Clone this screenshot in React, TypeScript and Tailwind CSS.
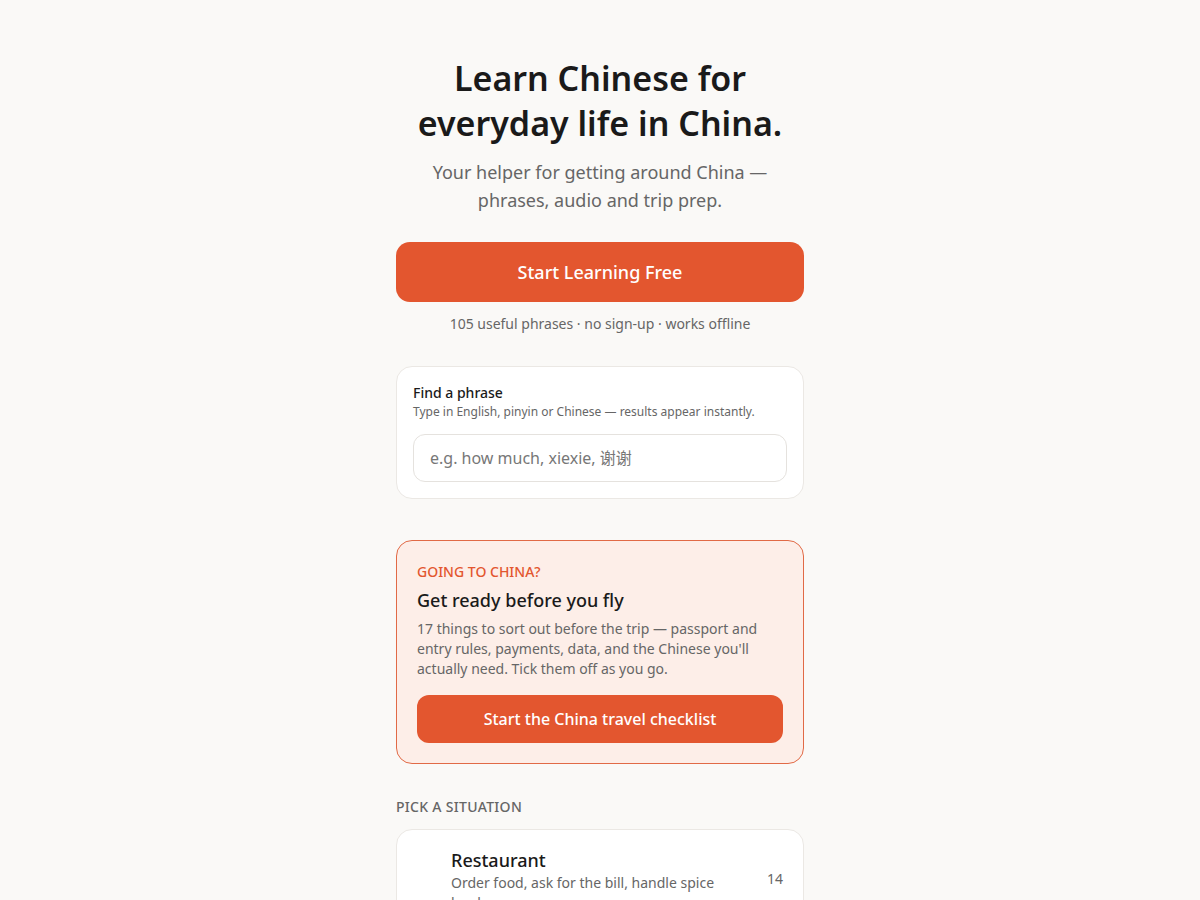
export default function App() {
    const font = "font-['Noto_Sans','Noto_Sans_CJK_SC',sans-serif]";

    return (
        <div className={`min-h-[900px] bg-[#faf9f7] text-[#1a1a1a] ${font}`}>
            <main className="mx-auto w-[408px] pt-[56px] pb-16">
                {/* hero */}
                <h1 className="text-center text-[34px] font-semibold leading-[45px]">
                    Learn Chinese for everyday life in China.
                </h1>
                <p className="mx-auto mt-3 max-w-[360px] text-center text-[18px] leading-[28px] text-[#666]">
                    Your helper for getting around China — phrases, audio and trip prep.
                </p>
                <button className="mt-7 flex h-[60px] w-full items-center justify-center rounded-[14px] bg-[#e3562f] text-[18px] font-medium text-white">
                    Start Learning Free
                </button>
                <p className="mt-3 text-center text-[14px] leading-5 text-[#666]">
                    105 useful phrases · no sign-up · works offline
                </p>

                {/* search */}
                <section className="mt-8 rounded-2xl border border-[#ebe8e4] bg-white p-4">
                    <h2 className="text-[14px] font-medium leading-5">Find a phrase</h2>
                    <p className="mt-[1px] text-[12px] leading-4 text-[#666]">
                        Type in English, pinyin or Chinese — results appear instantly.
                    </p>
                    <input
                        type="text"
                        placeholder="e.g. how much, xiexie, 谢谢"
                        className="mt-[14px] h-12 w-full rounded-xl border border-[#e5e2de] bg-white px-4 text-[16px] outline-none placeholder:text-[#777]"
                    />
                </section>

                {/* travel checklist */}
                <section className="mt-[41px] rounded-2xl border border-[#e16a46] bg-[#fdeee8] px-5 pt-[21px] pb-5">
                    <p className="text-[14px] font-medium uppercase leading-5 text-[#e3562f]">Going to China?</p>
                    <h2 className="mt-[6px] text-[18px] font-medium leading-6">Get ready before you fly</h2>
                    <p className="mt-[7px] text-[14px] leading-5 text-[#666]">
                        17 things to sort out before the trip — passport and entry rules, payments, data, and the Chinese you'll actually need. Tick them off as you go.
                    </p>
                    <button className="mt-4 flex h-12 w-full items-center justify-center rounded-xl bg-[#e3562f] text-[16px] font-medium text-white">
                        Start the China travel checklist
                    </button>
                </section>

                {/* situations */}
                <h3 className="mt-[33px] text-[14px] font-medium uppercase leading-5 tracking-[0.3px] text-[#666]">
                    Pick a situation
                </h3>
                <div className="mt-3 flex items-center gap-4 rounded-2xl border border-[#ebe8e4] bg-white py-[18px] pl-4 pr-5">
                    <span className="h-7 w-[22px] shrink-0" aria-hidden="true"></span>
                    <div className="flex-1">
                        <div className="text-[18px] font-medium leading-6">Restaurant</div>
                        <div className="mt-[1px] text-[14px] leading-5 text-[#666]">
                            Order food, ask for the bill, handle spice levels
                        </div>
                    </div>
                    <span className="mb-[4px] text-[14px] text-[#666]">14</span>
                </div>
            </main>
        </div>
    );
}
